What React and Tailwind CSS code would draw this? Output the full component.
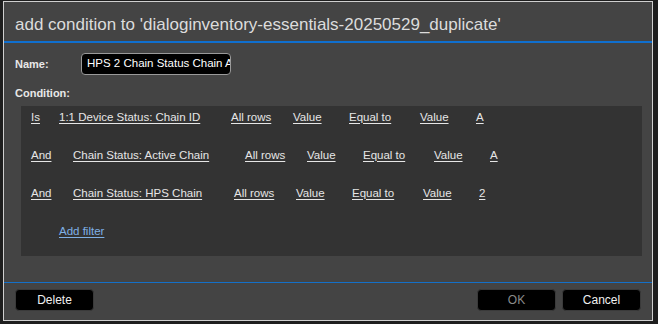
import React from 'react';

const rows = [
  { conj: 'Is', conjW: 'w-[28px]', field: '1:1 Device Status: Chain ID', fieldW: 'w-[172px]', last: 'A' },
  { conj: 'And', conjW: 'w-[42px]', field: 'Chain Status: Active Chain', fieldW: 'w-[172px]', last: 'A' },
  { conj: 'And', conjW: 'w-[42px]', field: 'Chain Status: HPS Chain', fieldW: 'w-[161px]', last: '2' },
];

const Link = ({ children, className = '' }) => (
  <span className={`underline underline-offset-2 text-[#e6e6e6] whitespace-nowrap ${className}`}>{children}</span>
);

const Btn = ({ children, disabled }) => (
  <button
    className={`w-[79px] h-[22px] rounded-[4px] bg-black border border-[#3a3a3a] text-[12px] ${disabled ? 'text-[#8a8a8a]' : 'text-[#f0f0f0]'}`}
  >
    {children}
  </button>
);

const App = () => {
  return (
    <div className="w-[658px] h-[324px] bg-[#1e1e1e] overflow-hidden pt-[1px] pl-[3px] font-['Liberation_Sans',sans-serif]">
      <div className="w-[650px] h-[320px] border border-[#cfcfcf] bg-[#444444] flex flex-col">
        {/* title */}
        <div className="h-[39px] pl-[11px] pt-[13px] text-[17px] leading-[20px] text-[#dcdcdc] whitespace-nowrap">
          add condition to 'dialoginventory-essentials-20250529_duplicate'
        </div>
        <div className="h-[2px] bg-[#0f6fcf]" />

        {/* name */}
        <div className="flex items-center mt-[10px] pl-[11px] h-[22px]">
          <span className="w-[66px] text-[11px] font-bold text-[#e8e8e8]">Name:</span>
          <div className="w-[150px] h-[22px] rounded-[4px] bg-black border border-[#9a9a9a] px-[5px] flex items-center overflow-hidden">
            <span className="text-[11.5px] text-white whitespace-nowrap">HPS 2 Chain Status Chain A</span>
          </div>
        </div>

        <div className="mt-[10px] pl-[11px] text-[11px] font-bold text-[#e8e8e8]">Condition:</div>

        {/* condition panel */}
        <div className="ml-[17px] mt-[4px] w-[621px] h-[150px] bg-[#333333] pl-[10px] flex flex-col gap-[14px] text-[11.5px]">
          {rows.map((r, i) => (
            <div key={i} className="h-[24px] flex items-center">
              <div className={r.conjW}><Link>{r.conj}</Link></div>
              <div className={r.fieldW}><Link>{r.field}</Link></div>
              <div className="w-[62px]"><Link>All rows</Link></div>
              <div className="w-[56px]"><Link>Value</Link></div>
              <div className="w-[71px]"><Link>Equal to</Link></div>
              <div className="w-[56px]"><Link>Value</Link></div>
              <div><Link>{r.last}</Link></div>
            </div>
          ))}
          <div className="h-[24px] flex items-center pl-[28px]">
            <span className="underline underline-offset-2 text-[#7fb0e6]">Add filter</span>
          </div>
        </div>

        <div className="mt-[26px] h-[1px] bg-[#1470c8]" />

        {/* buttons */}
        <div className="flex items-center mt-[6px] px-[11px]">
          <Btn>Delete</Btn>
          <div className="flex-1" />
          <div className="flex gap-[6px]">
            <Btn disabled>OK</Btn>
            <Btn>Cancel</Btn>
          </div>
        </div>
      </div>
    </div>
  );
};

export default App;
